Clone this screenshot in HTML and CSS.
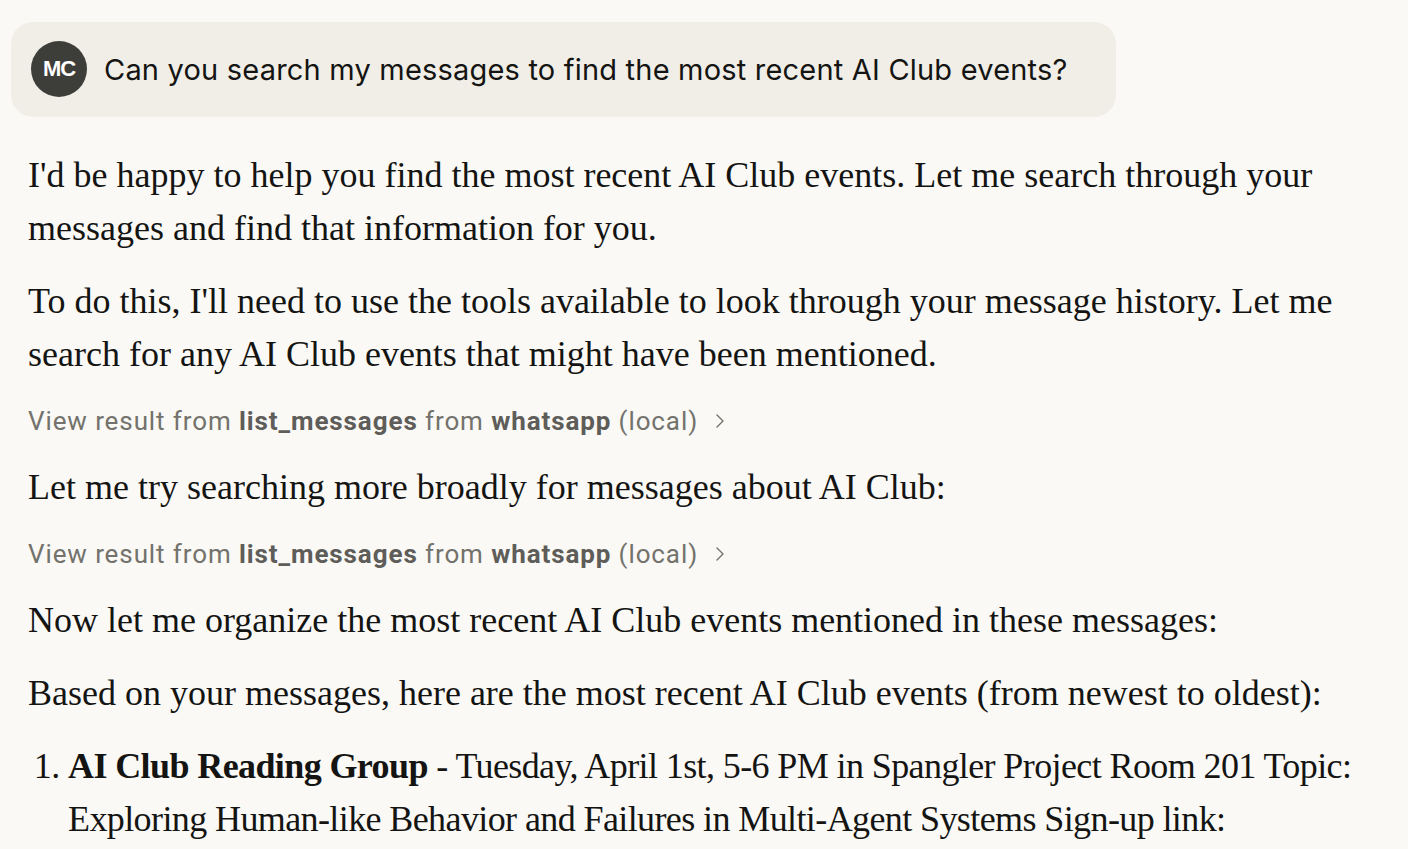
FILE: index.html
```html
<!DOCTYPE html>
<html lang="en">

<head>
	<meta charset="UTF-8">
	<meta name="viewport" content="width=device-width, initial-scale=1.0">
	<title>AI Club events</title>

	<link rel="stylesheet" href="styles.css">
</head>

<body>
	<main class="chat">
		<div class="user-message">
			<span class="avatar">MC</span>
			<p class="user-text">Can you search my messages to find the most recent AI Club events?</p>
		</div>

		<section class="reply">
			<p>
				I'd be happy to help you find the most recent AI Club events. Let me search through your
				messages and find that information for you.
			</p>
			<p>
				To do this, I'll need to use the tools available to look through your message history. Let me
				search for any AI Club events that might have been mentioned.
			</p>

			<button class="tool-result">
				<span>View result from <strong>list_messages</strong> from <strong>whatsapp</strong> (local)</span>
				<svg class="chevron" viewBox="0 0 8 14" width="8" height="14">
					<path d="M1 1 L7 7 L1 13" fill="none" stroke="currentColor" stroke-width="1.4" stroke-linecap="round" stroke-linejoin="round" />
				</svg>
			</button>

			<p>Let me try searching more broadly for messages about AI Club:</p>

			<button class="tool-result">
				<span>View result from <strong>list_messages</strong> from <strong>whatsapp</strong> (local)</span>
				<svg class="chevron" viewBox="0 0 8 14" width="8" height="14">
					<path d="M1 1 L7 7 L1 13" fill="none" stroke="currentColor" stroke-width="1.4" stroke-linecap="round" stroke-linejoin="round" />
				</svg>
			</button>

			<p>Now let me organize the most recent AI Club events mentioned in these messages:</p>
			<p>Based on your messages, here are the most recent AI Club events (from newest to oldest):</p>

			<ol class="events">
				<li>
					<strong>AI Club Reading Group</strong> - Tuesday, April 1st, 5-6 PM in Spangler Project Room 201 Topic:
					Exploring Human-like Behavior and Failures in Multi-Agent Systems Sign-up link:
				</li>
			</ol>
		</section>
	</main>
</body>

</html>
```

FILE: styles.css
```css
*,
*::before,
*::after {
	margin: 0;
	padding: 0;
	box-sizing: border-box;

	--text-color: #141413;
	--muted-color: #73726c;
	--muted-strong: #5e5d59;
	--bubble-color: #f0eee6;
	--avatar-color: #3d3d3a;
	--background-color: #faf9f5;
}

body {
	background-color: var(--background-color);
	color: var(--text-color);
	overflow: hidden;
}

.chat {
	padding: 22px 11px;
	display: flex;
	flex-direction: column;
	align-items: flex-start;
	gap: 32px;
}

.user-message {
	display: flex;
	align-items: center;
	gap: 17px;
	padding: 19px 48px 20px 20px;

	border-radius: 22px;
	background-color: var(--bubble-color);
}

.avatar {
	width: 56px;
	height: 56px;
	flex-shrink: 0;

	display: flex;
	justify-content: center;
	align-items: center;

	border-radius: 50%;
	background-color: var(--avatar-color);
	color: #fff;
	font-family: "Liberation Sans", Arial, sans-serif;
	font-weight: bold;
	font-size: 22px;
	letter-spacing: -1px;
}

.user-text {
	font-family: "Inter", "Liberation Sans", sans-serif;
	font-size: 29px;
	letter-spacing: 0.2px;
	color: var(--text-color);
}

.reply {
	padding: 0 17px;
	display: flex;
	flex-direction: column;
	align-items: flex-start;
	gap: 20px;

	font-family: "Liberation Serif", "Times New Roman", serif;
	font-size: 36px;
	line-height: 53px;
}

.tool-result {
	display: flex;
	align-items: center;
	gap: 18px;
	height: 40px;

	border: none;
	background: none;
	color: var(--muted-color);
	font-family: "Roboto", "Liberation Sans", sans-serif;
	font-size: 26px;
	letter-spacing: 0.9px;
	cursor: pointer;
}

.tool-result strong {
	color: var(--muted-strong);
	font-weight: 700;
}

.chevron {
	width: 8px;
	height: 14px;
}

.events {
	padding-left: 40px;
	letter-spacing: -0.6px;
}
```
